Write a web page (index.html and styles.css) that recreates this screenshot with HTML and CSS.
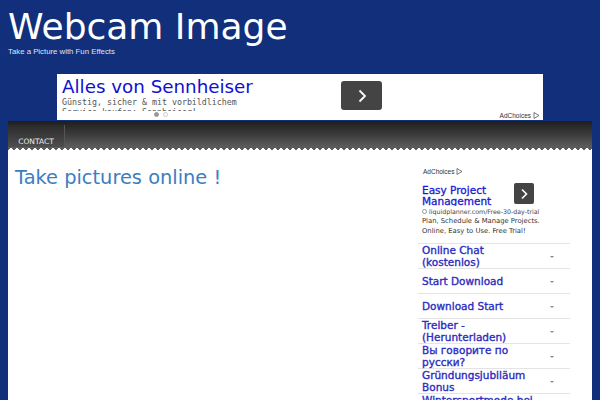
FILE: index.html
```html
<!DOCTYPE html>
<html>
<head>
<meta charset="utf-8">
<link rel="stylesheet" href="styles.css">
</head>
<body>
<header class="site-header">
  <h1 class="site-title">Webcam Image</h1>
  <p class="site-desc">Take a Picture with Fun Effects</p>
</header>
<div class="top-ad">
  <div class="top-ad-text">
    <div class="top-ad-title">Alles von Sennheiser</div>
    <div class="top-ad-body">Günstig, sicher &amp; mit vorbildlichem<br>Service kaufen: Sennheiser!</div>
    <div class="dots"><span class="dot on"></span><span class="dot"></span></div>
  </div>
  <div class="top-ad-btn"><svg width="12" height="14" viewBox="0 0 12 14"><path d="M3.5 1.5 L9 7 L3.5 12.5" fill="none" stroke="#fff" stroke-width="1.8"/></svg></div>
  <div class="adchoices top-choices">AdChoices <svg width="7" height="7" viewBox="0 0 7 7"><path d="M1 0.5 L6 3.5 L1 6.5 Z" fill="none" stroke="#555" stroke-width="0.8"/></svg></div>
</div>
<div class="page">
  <nav class="navbar">
    <a class="nav-item">CONTACT</a>
  </nav>
  <div class="zigzag"></div>
  <div class="main">
    <div class="content">
      <h2 class="entry-title">Take pictures online !</h2>
    </div>
    <aside class="sidebar">
      <div class="adchoices side-choices">AdChoices <svg width="7" height="7" viewBox="0 0 7 7"><path d="M1 0.5 L6 3.5 L1 6.5 Z" fill="none" stroke="#555" stroke-width="0.8"/></svg></div>
      <div class="side-ad">
        <div class="side-ad-head">
          <div class="side-ad-title">Easy Project Management</div>
          <div class="side-ad-btn"><svg width="10" height="12" viewBox="0 0 10 12"><path d="M3 1.5 L7.5 6 L3 10.5" fill="none" stroke="#fff" stroke-width="1.6"/></svg></div>
        </div>
        <div class="side-ad-url"><span class="url-ico"></span>liquidplanner.com/Free-30-day-trial</div>
        <div class="side-ad-body">Plan, Schedule &amp; Manage Projects.<br>Online, Easy to Use. Free Trial!</div>
      </div>
      <ul class="links">
        <li><span>Online Chat<br>(kostenlos)</span><i class="caret"></i></li>
        <li><span>Start Download</span><i class="caret"></i></li>
        <li><span>Download Start</span><i class="caret"></i></li>
        <li><span>Treiber -<br>(Herunterladen)</span><i class="caret"></i></li>
        <li><span>Вы говорите по<br>русски?</span><i class="caret"></i></li>
        <li><span>Gründungsjubiläum<br>Bonus</span><i class="caret"></i></li>
        <li><span>Wintersportmode bei<br>Zalando</span><i class="caret"></i></li>
      </ul>
    </aside>
  </div>
</div>
</body>
</html>
```
FILE: styles.css
```css
html, body {
  margin: 0;
  padding: 0;
}
body {
  background: #112f7b;
  font-family: "DejaVu Sans", sans-serif;
  height: 400px;
  overflow: hidden;
}
.site-header {
  padding: 7px 8px 0;
  height: 67px;
  box-sizing: border-box;
}
.site-title {
  margin: 0;
  font-weight: normal;
  font-size: 36px;
  line-height: 40px;
  color: #fff;
}
.site-desc {
  margin: 0;
  font-family: "Liberation Sans", Arial, sans-serif;
  font-size: 7.8px;
  line-height: 10px;
  color: #dfe6f5;
}
.top-ad {
  margin: 7px 0 0 57px;
  width: 486px;
  height: 46px;
  background: #fff;
  position: relative;
  display: flex;
  box-sizing: border-box;
  padding: 2px 0 0 5px;
}
.top-ad-text {
  width: 279px;
  height: 44px;
  overflow: hidden;
  position: relative;
}
.top-ad-title {
  color: #1010d0;
  font-size: 18.3px;
  line-height: 21px;
  white-space: nowrap;
}
.top-ad-body {
  font-family: "DejaVu Sans Mono", monospace;
  font-size: 8.3px;
  line-height: 10px;
  color: #555;
  height: 14px;
  overflow: hidden;
  white-space: nowrap;
}
.dots {
  display: flex;
  gap: 4px;
  padding-left: 92px;
  margin-top: 1px;
}
.dot {
  width: 5px;
  height: 5px;
  border-radius: 50%;
  border: 1px solid #ccc;
  box-sizing: border-box;
}
.dot.on { background: #999; border-color: #999; }
.top-ad-btn {
  margin-top: 5px;
  width: 41px;
  height: 29px;
  background: #444;
  border-radius: 3px;
  display: flex;
  align-items: center;
  justify-content: center;
}
.adchoices {
  font-family: "Liberation Sans", Arial, sans-serif;
  font-size: 6.5px;
  color: #333;
  display: flex;
  align-items: center;
  gap: 2px;
}
.top-choices {
  position: absolute;
  right: 3px;
  bottom: 1px;
}
.page {
  margin: 1px 8px 0;
  background: #fff;
  height: 300px;
}
.navbar {
  height: 26px;
  background: linear-gradient(#1e1e1e 0%, #3a3a3a 50%, #5c5c5c 100%);
  display: flex;
  align-items: flex-end;
}
.nav-item {
  height: 22px;
  width: 57px;
  border-right: 1px solid #555;
  background: linear-gradient(#2a2a2a, #4e4e4e);
  color: #ececec;
  font-size: 7.5px;
  display: flex;
  align-items: center;
  justify-content: center;
  padding-top: 10px;
  box-sizing: border-box;
}
.zigzag {
  height: 4px;
  background:
    linear-gradient(135deg, #5c5c5c 25%, transparent 25%) 0 0 / 6px 8px repeat-x,
    linear-gradient(225deg, #5c5c5c 25%, transparent 25%) 0 0 / 6px 8px repeat-x;
}
.main {
  display: flex;
  padding: 0 0 0 7px;
}
.content {
  flex: 1;
}
.entry-title {
  margin: 15px 0 0;
  font-weight: normal;
  font-size: 19.4px;
  line-height: 24px;
  color: #3b7ec0;
}
.sidebar {
  width: 152px;
  margin-right: 22px;
  padding-top: 15px;
}
.side-choices {
  padding-left: 5px;
  height: 10px;
}
.side-ad {
  padding: 7px 0 0 4px;
}
.side-ad-head {
  display: flex;
  justify-content: space-between;
  align-items: flex-start;
  width: 112px;
  height: 24px;
}
.side-ad-title {
  color: #1a1ad0;
  font-size: 10.5px;
  line-height: 11px;
  height: 21px;
  overflow: hidden;
  width: 90px;
  margin-top: 2px;
  -webkit-text-stroke: 0.3px #1a1ad0;
}
.side-ad-btn {
  width: 20px;
  height: 21px;
  background: #444;
  border-radius: 2px;
  display: flex;
  align-items: center;
  justify-content: center;
}
.side-ad-url {
  font-size: 6.3px;
  color: #444;
  display: flex;
  align-items: center;
  gap: 2px;
  height: 9px;
  white-space: nowrap;
}
.url-ico {
  width: 3px;
  height: 3px;
  border: 1px solid #99a;
  border-radius: 50%;
}
.side-ad-body {
  font-size: 6.8px;
  line-height: 10px;
  color: #333;
  white-space: nowrap;
}
.links {
  list-style: none;
  margin: 7px 0 0;
  padding: 0;
}
.links li {
  height: 25px;
  border-top: 1px solid #e4e4e4;
  box-sizing: border-box;
  display: flex;
  align-items: center;
  justify-content: space-between;
  padding: 0 16px 0 4px;
  color: #2b2bc0;
  font-size: 10.5px;
  line-height: 12px;
  -webkit-text-stroke: 0.35px #2b2bc0;
}
.caret {
  width: 0;
  height: 0;
  border-left: 2px solid transparent;
  border-right: 2px solid transparent;
  border-top: 2px solid #888;
  margin-top: 2px;
}
```
